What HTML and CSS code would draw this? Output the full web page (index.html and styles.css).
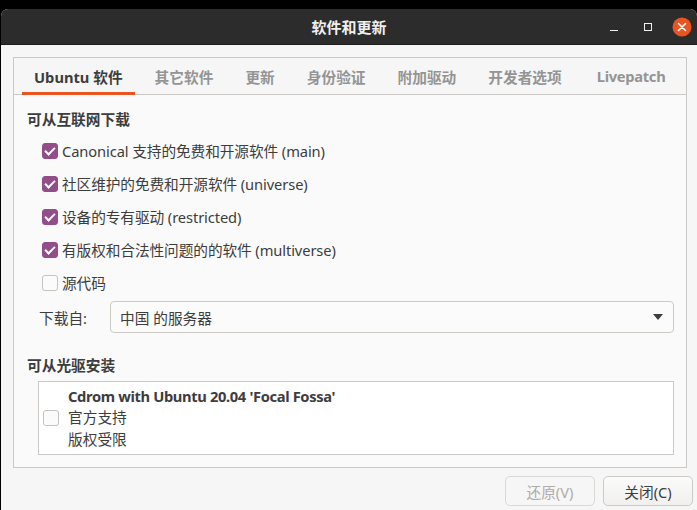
FILE: index.html
```html
<!DOCTYPE html>
<html lang="zh-CN">
<head>
<meta charset="utf-8">
<title>软件和更新</title>
<link rel="stylesheet" href="styles.css">
</head>
<body>
<div class="window">
  <header class="titlebar">
    <div class="tb-side"></div>
    <div class="tb-title">软件和更新</div>
    <div class="tb-controls">
      <span class="ctl ctl-min"></span>
      <span class="ctl ctl-max"></span>
      <span class="ctl ctl-close">
        <svg width="20" height="20" viewBox="0 0 20 20"><circle cx="10" cy="10" r="9.5" fill="#e95420"/><path d="M6.5 6.5 L13.5 13.5 M13.5 6.5 L6.5 13.5" stroke="#fff" stroke-width="1.6" stroke-linecap="round"/></svg>
      </span>
    </div>
  </header>
  <main class="content">
    <section class="notebook">
      <nav class="tabs">
        <span class="tab active">Ubuntu 软件</span>
        <span class="tab">其它软件</span>
        <span class="tab">更新</span>
        <span class="tab">身份验证</span>
        <span class="tab">附加驱动</span>
        <span class="tab">开发者选项</span>
        <span class="tab tab-latin">Livepatch</span>
      </nav>
      <div class="page">
        <h2 class="heading">可从互联网下载</h2>
        <ul class="checks">
          <li class="check-row"><span class="cb on"></span>Canonical 支持的免费和开源软件 (main)</li>
          <li class="check-row"><span class="cb on"></span>社区维护的免费和开源软件 (universe)</li>
          <li class="check-row"><span class="cb on"></span>设备的专有驱动 (restricted)</li>
          <li class="check-row"><span class="cb on"></span>有版权和合法性问题的的软件 (multiverse)</li>
          <li class="check-row"><span class="cb"></span>源代码</li>
        </ul>
        <div class="server-row">
          <span class="server-label">下载自:</span>
          <div class="combo"><span>中国 的服务器</span><span class="arrow"></span></div>
        </div>
        <h2 class="heading heading-2">可从光驱安装</h2>
        <div class="cdbox">
          <span class="cb"></span>
          <div class="cd-text">
            <div class="cd-title">Cdrom with Ubuntu 20.04 'Focal Fossa'</div>
            <div>官方支持</div>
            <div>版权受限</div>
          </div>
        </div>
      </div>
    </section>
    <div class="actions">
      <button class="btn" disabled>还原(V)</button>
      <button class="btn">关闭(C)</button>
    </div>
  </main>
</div>
</body>
</html>
```

FILE: styles.css
```css
* { box-sizing: border-box; }
html, body { margin: 0; padding: 0; }
body {
  background: #000;
  width: 697px;
  height: 510px;
  overflow: hidden;
  font-family: "Noto Sans", "Noto Sans CJK SC", sans-serif;
  font-size: 14.7px;
  color: #3d3d3d;
}
.window {
  margin: 9px 0 0 1px;
  width: 696px;
  height: 501px;
  background: #f6f6f6;
  border-radius: 7px 7px 0 0;
  overflow: hidden;
  display: flex;
  flex-direction: column;
}
.titlebar {
  height: 36px;
  background: #2c2c2c;
  display: grid;
  grid-template-columns: 1fr auto 1fr;
  align-items: center;
  border-bottom: 1px solid #1e1e1e;
}
.tb-title {
  color: #f0f0f0;
  font-weight: bold;
  font-size: 15px;
  font-family: "Noto Sans CJK SC", sans-serif;
}
.tb-controls {
  display: flex;
  justify-content: flex-end;
  align-items: center;
  padding-right: 5px;
}
.ctl { display: block; }
.ctl-min {
  width: 8px; height: 1.5px; background: #f0f0f0;
  margin-top: 8px; margin-right: 26px;
}
.ctl-max {
  width: 8px; height: 8px; border: 1.5px solid #f0f0f0;
  margin-right: 20px;
}
.ctl-close { width: 20px; height: 20px; }
.ctl-close svg { display: block; }

.content {
  flex: 1;
  padding: 12px 10px 0 12px;
  display: flex;
  flex-direction: column;
}
.notebook {
  height: 411px;
  border: 1px solid #cbc8c5;
  background: #fafafa;
  display: flex;
  flex-direction: column;
}
.tabs {
  height: 37px;
  background: #f6f6f6;
  border-bottom: 1px solid #cbc8c5;
  display: flex;
  align-items: stretch;
  padding-left: 8px;
  gap: 8px;
}
.tab {
  display: flex;
  align-items: center;
  padding: 2px 12px 0;
  font-weight: bold;
  color: #949494;
  border-bottom: 3px solid transparent;
  margin-bottom: -1px;
  white-space: nowrap;
}
.tab-latin { letter-spacing: -0.3px; margin-left: 3px; }
.tab.active {
  color: #3d3d3d;
  border-bottom-color: #e95420;
}
.page {
  flex: 1;
  padding: 13px 12px 12px 13px;
  display: flex;
  flex-direction: column;
}
.heading {
  margin: 0;
  font-size: 14.7px;
  font-weight: bold;
  line-height: 22px;
}
.checks {
  list-style: none;
  margin: 4px 0 0 0;
  padding: 0 0 0 15px;
}
.check-row {
  height: 33px;
  display: flex;
  align-items: center;
  gap: 4px;
  letter-spacing: -0.1px;
}
.cb {
  width: 16px;
  height: 16px;
  border: 1px solid #c6c2be;
  border-radius: 3px;
  background: #fbfbfb;
  flex: none;
  position: relative;
}
.cb.on {
  background: #924d8b;
  border-color: #924d8b;
}
.cb.on::after {
  content: "";
  position: absolute;
  left: 4px;
  top: 1px;
  width: 4px;
  height: 8px;
  border-right: 2px solid #fff;
  border-bottom: 2px solid #fff;
  transform: rotate(45deg);
}
.server-row {
  margin-top: 2px;
  display: flex;
  align-items: center;
  padding-left: 12px;
}
.server-label { width: 71px; }
.combo {
  flex: 1;
  height: 32px;
  border: 1px solid #cdc9c5;
  border-radius: 4px;
  background: #fbfbfb;
  display: flex;
  align-items: center;
  justify-content: space-between;
  padding: 0 10px 0 9px;
}
.arrow {
  width: 0; height: 0;
  border-left: 5px solid transparent;
  border-right: 5px solid transparent;
  border-top: 6px solid #3d3d3d;
}
.heading-2 { margin-top: 21px; }
.cdbox {
  margin: 5px 0 0 11px;
  height: 74px;
  background: #fff;
  border: 1px solid #cbc8c5;
  display: flex;
  align-items: center;
  padding-left: 4px;
  gap: 9px;
}
.cd-text { line-height: 21.5px; }
.cd-title { font-weight: bold; letter-spacing: -0.35px; }
.actions {
  display: flex;
  justify-content: flex-end;
  gap: 8px;
  padding-top: 8px;
  margin-right: -6px;
}
.btn {
  width: 90px;
  height: 30px;
  font-family: inherit;
  font-size: 14.7px;
  color: #3d3d3d;
  background: linear-gradient(#fbfbfb, #f1f0ef);
  border: 1px solid #cdc9c5;
  border-radius: 5px;
  padding: 0;
}
.btn:disabled {
  color: #b0aca8;
  background: #f6f6f6;
  border-color: #dad7d4;
}
```
